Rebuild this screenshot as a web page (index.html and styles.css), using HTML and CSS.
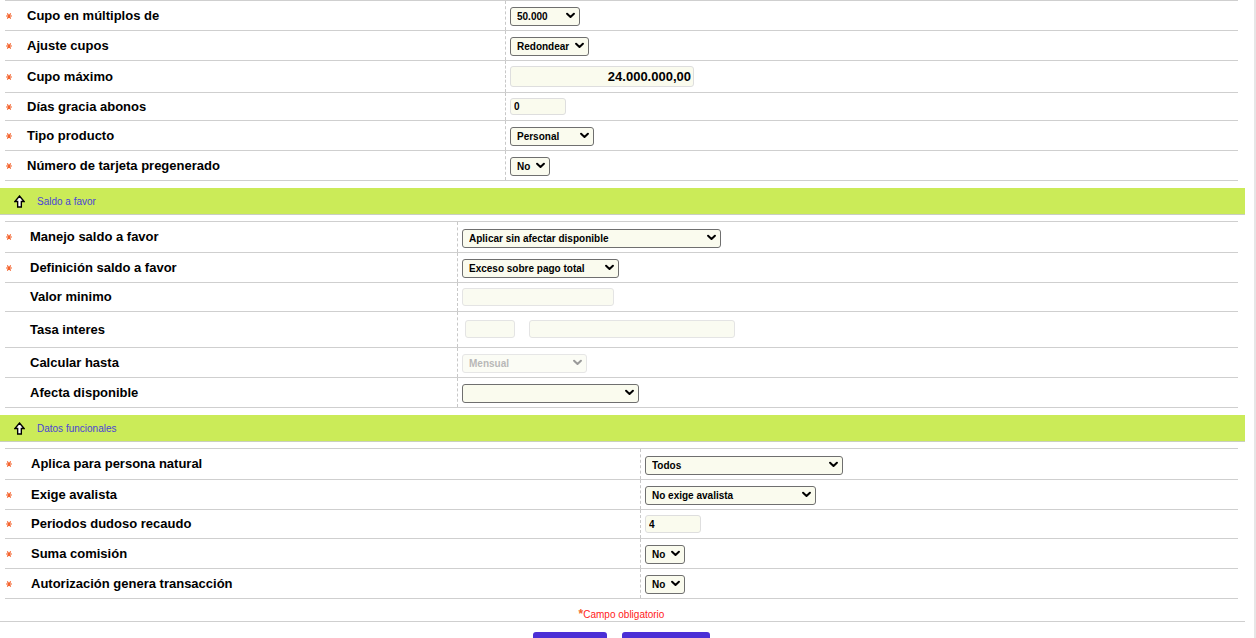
FILE: index.html
```html
<!DOCTYPE html>
<html lang="es">
<head>
<meta charset="utf-8">
<title>Producto</title>
<link rel="stylesheet" href="styles.css">
</head>
<body>
<div class="page">
  <main class="content">
    <section class="sec s1">
      <div class="row"><span class="req"><svg viewBox="0 0 6 6"><path d="M0 3H6M1.3 0.4L4.7 5.6M4.7 0.4L1.3 5.6"/></svg></span><span class="lbl">Cupo en múltiplos de</span>
        <div class="ctl"><span class="sel w70"><select><option>50.000</option></select><svg class="chev" viewBox="0 0 10 7"><path d="M1.2 1.5L5 5.2L8.8 1.5"/></svg></span></div></div>
      <div class="row"><span class="req"><svg viewBox="0 0 6 6"><path d="M0 3H6M1.3 0.4L4.7 5.6M4.7 0.4L1.3 5.6"/></svg></span><span class="lbl">Ajuste cupos</span>
        <div class="ctl"><span class="sel w79"><select><option>Redondear</option></select><svg class="chev" viewBox="0 0 10 7"><path d="M1.2 1.5L5 5.2L8.8 1.5"/></svg></span></div></div>
      <div class="row"><span class="req"><svg viewBox="0 0 6 6"><path d="M0 3H6M1.3 0.4L4.7 5.6M4.7 0.4L1.3 5.6"/></svg></span><span class="lbl">Cupo máximo</span>
        <div class="ctl"><input class="inp big w184" value="24.000.000,00"></div></div>
      <div class="row"><span class="req"><svg viewBox="0 0 6 6"><path d="M0 3H6M1.3 0.4L4.7 5.6M4.7 0.4L1.3 5.6"/></svg></span><span class="lbl">Días gracia abonos</span>
        <div class="ctl"><input class="inp short w56" value="0"></div></div>
      <div class="row"><span class="req"><svg viewBox="0 0 6 6"><path d="M0 3H6M1.3 0.4L4.7 5.6M4.7 0.4L1.3 5.6"/></svg></span><span class="lbl">Tipo producto</span>
        <div class="ctl"><span class="sel w84"><select><option>Personal</option></select><svg class="chev" viewBox="0 0 10 7"><path d="M1.2 1.5L5 5.2L8.8 1.5"/></svg></span></div></div>
      <div class="row"><span class="req"><svg viewBox="0 0 6 6"><path d="M0 3H6M1.3 0.4L4.7 5.6M4.7 0.4L1.3 5.6"/></svg></span><span class="lbl">Número de tarjeta pregenerado</span>
        <div class="ctl"><span class="sel w40"><select><option>No</option></select><svg class="chev" viewBox="0 0 10 7"><path d="M1.2 1.5L5 5.2L8.8 1.5"/></svg></span></div></div>
    </section>

    <div class="band"><svg class="up" viewBox="0 0 12 14"><path d="M6 1L11 7H8V13H4V7H1Z"/></svg><span>Saldo a favor</span></div>

    <section class="sec s2">
      <div class="row"><span class="req"><svg viewBox="0 0 6 6"><path d="M0 3H6M1.3 0.4L4.7 5.6M4.7 0.4L1.3 5.6"/></svg></span><span class="lbl">Manejo saldo a favor</span>
        <div class="ctl"><span class="sel w259"><select><option>Aplicar sin afectar disponible</option></select><svg class="chev" viewBox="0 0 10 7"><path d="M1.2 1.5L5 5.2L8.8 1.5"/></svg></span></div></div>
      <div class="row"><span class="req"><svg viewBox="0 0 6 6"><path d="M0 3H6M1.3 0.4L4.7 5.6M4.7 0.4L1.3 5.6"/></svg></span><span class="lbl">Definición saldo a favor</span>
        <div class="ctl"><span class="sel w157"><select><option>Exceso sobre pago total</option></select><svg class="chev" viewBox="0 0 10 7"><path d="M1.2 1.5L5 5.2L8.8 1.5"/></svg></span></div></div>
      <div class="row"><span class="req"></span><span class="lbl">Valor minimo</span>
        <div class="ctl"><input class="inp dis w152" disabled></div></div>
      <div class="row"><span class="req"></span><span class="lbl">Tasa interes</span>
        <div class="ctl pair"><input class="inp dis w50" disabled><input class="inp dis w206" disabled></div></div>
      <div class="row"><span class="req"></span><span class="lbl">Calcular hasta</span>
        <div class="ctl"><span class="sel dsel w125"><select disabled><option>Mensual</option></select><svg class="chev" viewBox="0 0 10 7"><path d="M1.2 1.5L5 5.2L8.8 1.5"/></svg></span></div></div>
      <div class="row"><span class="req"></span><span class="lbl">Afecta disponible</span>
        <div class="ctl"><span class="sel w177"><select><option></option></select><svg class="chev" viewBox="0 0 10 7"><path d="M1.2 1.5L5 5.2L8.8 1.5"/></svg></span></div></div>
    </section>

    <div class="band"><svg class="up" viewBox="0 0 12 14"><path d="M6 1L11 7H8V13H4V7H1Z"/></svg><span>Datos funcionales</span></div>

    <section class="sec s3">
      <div class="row"><span class="req"><svg viewBox="0 0 6 6"><path d="M0 3H6M1.3 0.4L4.7 5.6M4.7 0.4L1.3 5.6"/></svg></span><span class="lbl">Aplica para persona natural</span>
        <div class="ctl"><span class="sel w198"><select><option>Todos</option></select><svg class="chev" viewBox="0 0 10 7"><path d="M1.2 1.5L5 5.2L8.8 1.5"/></svg></span></div></div>
      <div class="row"><span class="req"><svg viewBox="0 0 6 6"><path d="M0 3H6M1.3 0.4L4.7 5.6M4.7 0.4L1.3 5.6"/></svg></span><span class="lbl">Exige avalista</span>
        <div class="ctl"><span class="sel w171"><select><option>No exige avalista</option></select><svg class="chev" viewBox="0 0 10 7"><path d="M1.2 1.5L5 5.2L8.8 1.5"/></svg></span></div></div>
      <div class="row"><span class="req"><svg viewBox="0 0 6 6"><path d="M0 3H6M1.3 0.4L4.7 5.6M4.7 0.4L1.3 5.6"/></svg></span><span class="lbl">Periodos dudoso recaudo</span>
        <div class="ctl"><input class="inp w56" value="4"></div></div>
      <div class="row"><span class="req"><svg viewBox="0 0 6 6"><path d="M0 3H6M1.3 0.4L4.7 5.6M4.7 0.4L1.3 5.6"/></svg></span><span class="lbl">Suma comisión</span>
        <div class="ctl"><span class="sel w40"><select><option>No</option></select><svg class="chev" viewBox="0 0 10 7"><path d="M1.2 1.5L5 5.2L8.8 1.5"/></svg></span></div></div>
      <div class="row"><span class="req"><svg viewBox="0 0 6 6"><path d="M0 3H6M1.3 0.4L4.7 5.6M4.7 0.4L1.3 5.6"/></svg></span><span class="lbl">Autorización genera transacción</span>
        <div class="ctl"><span class="sel w40"><select><option>No</option></select><svg class="chev" viewBox="0 0 10 7"><path d="M1.2 1.5L5 5.2L8.8 1.5"/></svg></span></div></div>
    </section>

    <div class="note"><span class="nstar">*</span>Campo obligatorio</div>

    <div class="actions">
      <button class="btn b1" aria-label="Guardar"></button>
      <button class="btn b2" aria-label="Cancelar"></button>
    </div>
  </main>
  <div class="strip"></div>
</div>
</body>
</html>
```

FILE: styles.css
```css
* { box-sizing: border-box; }
html, body { margin: 0; padding: 0; background: #fff; }
body { font-family: "Liberation Sans", Arial, sans-serif; color: #000; overflow: hidden; }

.page { display: flex; width: 1256px; min-height: 100vh; }
.content { width: 1245px; flex: none; }
.strip { margin-left: auto; width: 2px; background: #e6e6e6; }

.sec { margin: 0 7px 0 5px; border-top: 1px solid #cfcfcf; }
.row {
  display: grid;
  align-items: stretch;
  border-bottom: 1px solid #cfcfcf;
}
.s1 .row { grid-template-columns: 22px 478px 1fr; }
.s2 .row { grid-template-columns: 25px 427px 1fr; }
.s3 .row { grid-template-columns: 26px 609px 1fr; }

.req { display: flex; align-items: center; padding-left: 1px; }
.req svg { width: 6px; height: 6px; stroke: #f4622c; stroke-width: 1.1; fill: none; overflow: visible; }
.lbl { display: flex; align-items: center; font-size: 13px; font-weight: bold; padding-bottom: 1px; }
.ctl {
  border-left: 1px dashed #c8c8c8;
  padding: 5px 0 5px 4px;
  display: flex;
  align-items: center;
}
.s2 .row:first-child .ctl, .s3 .row:first-child .ctl { padding-top: 6px; padding-bottom: 5px; }
.ctl.pair { padding: 8px 0 9px 7px; gap: 14px; }

.sel { position: relative; display: inline-block; height: 19px; }
.sel select {
  -webkit-appearance: none; appearance: none;
  width: 100%; height: 19px;
  margin: 0;
  border: 1px solid #6f6f6f;
  border-radius: 3px;
  background: #fafbee;
  font-family: "Liberation Sans", Arial, sans-serif;
  font-size: 10px; font-weight: bold; color: #000;
  padding: 0 14px 0 6px;
  line-height: 17px;
}
.chev {
  position: absolute; right: 5px; top: 6px;
  width: 9px; height: 7px;
  fill: none; stroke: #000; stroke-width: 2.2; stroke-linecap: round; stroke-linejoin: round;
  pointer-events: none;
}
.dsel select { border-color: #dcdcdc; color: #9a9a9a; background: #fafbf1; }
.dsel .chev { stroke: #9a9a9a; }

.inp {
  margin: 0;
  height: 18px;
  border: 1px solid #dedede;
  border-radius: 3px;
  background: #fafbee;
  font-family: "Liberation Sans", Arial, sans-serif;
  font-size: 10px; font-weight: bold; color: #000;
  padding: 0 3px;
}
.inp.short { height: 17px; }
.inp.big { height: 21px; font-size: 13px; text-align: right; padding-right: 2px; }
.inp.dis { background: #fafbf1; border-color: #e4e4e4; }

.w40 { width: 40px; } .w50 { width: 50px; } .w56 { width: 56px; } .w70 { width: 70px; }
.w79 { width: 79px; } .w84 { width: 84px; } .w125 { width: 125px; } .w152 { width: 152px; }
.w157 { width: 157px; } .w171 { width: 171px; } .w177 { width: 177px; } .w184 { width: 184px; }
.w198 { width: 198px; } .w206 { width: 206px; } .w259 { width: 259px; }

.band {
  display: flex; align-items: center; gap: 12px;
  height: 27px;
  margin: 7px 0 6px;
  padding-left: 14px;
  background: #cbeb58;
  border-bottom: 1px solid #c9cfc0;
}
.band .up { width: 11px; height: 13px; fill: #fff; stroke: #000; stroke-width: 1.5; stroke-linejoin: miter; }
.band span { font-size: 10px; color: #4a44d6; }

.note {
  height: 23px;
  border-bottom: 1px solid #cfcfcf;
  text-align: center;
  font-size: 10px;
  color: #ff1a1a;
  padding: 8px 2px 0 0;
}
.nstar { color: #f4622c; font-size: 12px; font-weight: bold; }

.actions { display: flex; justify-content: center; align-items: flex-start; gap: 15px; margin-top: 10px; padding-right: 3px; }
.btn {
  height: 30px;
  border: none;
  border-radius: 3px;
  background: #4b2fd6;
  padding: 0;
}
.b1 { width: 74px; } .b2 { width: 88px; }
```
